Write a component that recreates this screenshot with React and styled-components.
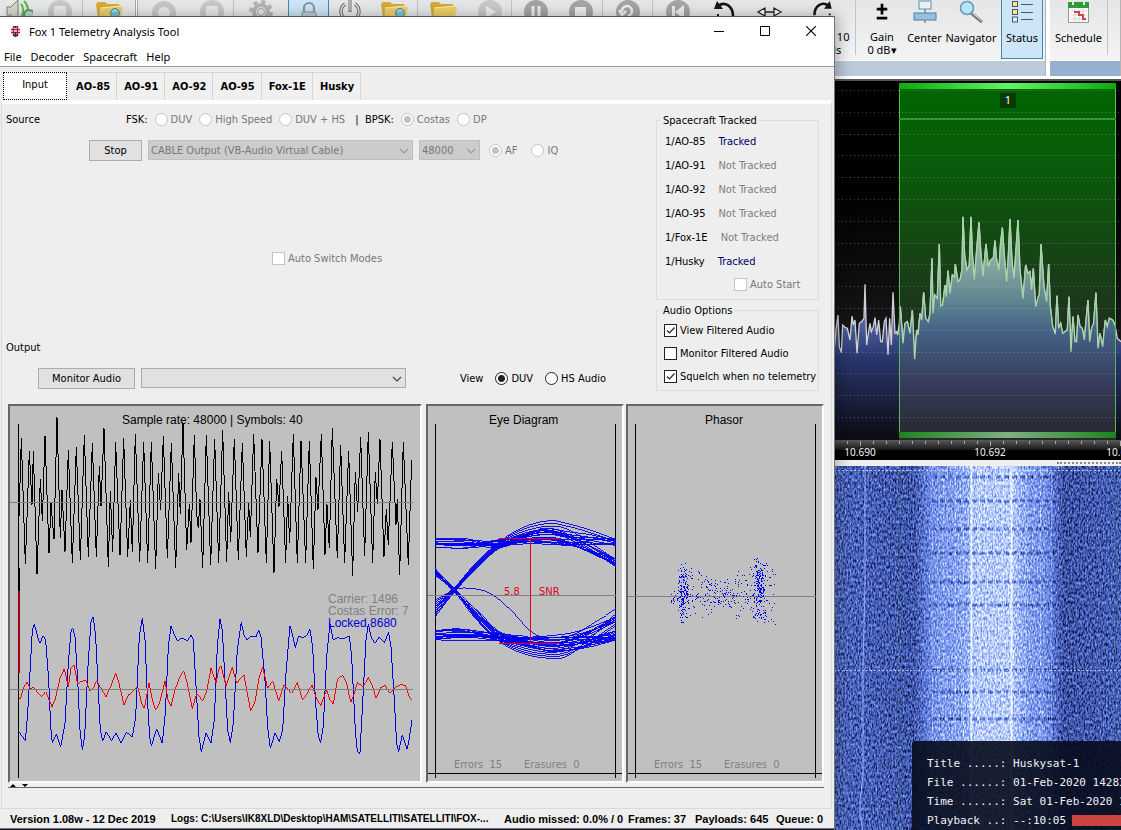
import React from 'react'
import styled, { createGlobalStyle, css } from 'styled-components';

const GlobalStyle = createGlobalStyle`
    * {
        box-sizing: border-box;
    }

    body {
        margin: 0;
        overflow: hidden;
        background: #14182c;
        font-family: "DejaVu Sans Condensed", "Noto Sans", sans-serif;
        font-size: 11px;
        color: #000;
    }
`;

/* ---------- trace data ---------- */

const AUDIO = '57,72 57,350 64,115 76,493 88,153 96,315 100,153 111,522 121,237 127,363 135,108 147,460 153,310 162,418 171,52 181,415 186,270 195,455 205,150 217,490 229,142 241,480 253,105 265,470 277,130 289,470 298,198 303,318 312,85 325,502 331,272 338,455 347,127 360,465 371,115 383,470 391,300 397,455 406,102 419,485 431,126 443,490 454,126 467,506 475,220 482,330 490,108 502,475 514,130 527,505 536,220 541,343 549,65 560,450 568,312 573,430 583,105 590,340 595,385 600,297 608,505 619,105 632,495 644,118 656,490 668,90 680,485 686,277 692,425 703,117 715,480 727,130 739,470 746,308 751,412 761,102 774,460 786,118 799,488 809,122 822,520 830,237 837,320 845,153 857,488 863,287 869,428 880,102 892,490 903,122 917,488 928,124 940,508 948,232 954,330 964,102 975,465 981,312 988,445 997,85 1012,475 1022,135 1034,488 1046,153 1058,528 1066,215 1073,335 1082,112 1094,467 1105,97 1118,490 1126,215 1132,312 1140,117 1152,470 1159,328 1165,435 1177,126 1188,375 1192,297 1199,525 1210,126 1225,495 1235,180';

const BITS = '57,457 64,465 76,482 83,400 97,150 103,132 109,155 119,190 130,167 137,180 146,300 152,440 157,488 169,462 182,502 195,430 205,250 213,155 218,143 225,170 233,300 240,450 247,510 254,470 264,260 273,125 280,110 287,170 295,330 301,450 308,484 319,455 334,482 348,460 363,488 380,457 397,472 407,410 418,170 427,115 435,180 443,370 449,470 454,498 470,447 487,490 496,400 505,200 513,138 523,165 533,182 545,174 562,182 574,165 580,180 590,350 597,470 604,515 618,460 633,490 643,420 652,200 660,118 667,150 675,300 683,450 691,488 700,430 712,210 724,127 732,165 741,180 750,171 768,171 776,150 783,170 795,300 803,440 811,505 825,460 838,485 848,450 858,280 870,138 878,165 886,203 896,167 908,173 922,165 930,148 938,200 947,370 955,470 962,488 970,440 980,230 990,130 1000,180 1012,173 1030,177 1048,168 1055,230 1066,450 1072,515 1080,520 1090,330 1098,180 1105,133 1115,175 1125,190 1138,171 1153,188 1166,157 1173,200 1183,360 1190,490 1196,515 1207,465 1222,508 1228,475 1236,420';

const ERROR = '57,355 62,355 68,330 81,305 90,325 102,323 112,337 124,350 137,335 156,380 165,360 180,295 193,266 205,320 213,265 222,255 233,312 242,305 257,300 270,332 280,325 290,302 303,325 318,350 330,325 347,280 357,310 372,375 385,345 400,333 413,320 425,370 433,385 447,308 457,360 467,390 478,370 495,302 504,360 513,378 525,330 540,290 551,272 562,310 577,387 590,340 608,362 620,335 633,265 648,310 656,270 663,257 678,318 688,290 697,262 710,310 720,298 732,285 742,340 752,393 765,365 778,290 788,262 803,325 818,303 836,362 852,315 875,340 892,307 908,360 922,340 936,315 948,350 962,377 980,330 990,360 1000,372 1012,300 1028,285 1040,310 1052,367 1060,350 1072,308 1090,320 1105,292 1118,320 1128,355 1143,322 1155,316 1170,340 1182,325 1203,313 1217,318 1228,350 1236,360';

const SPECTRUM = '12,455 14,470 18,420 24,375 28,470 34,488 38,405 45,412 52,415 60,450 66,378 70,405 75,390 81,490 88,400 95,395 102,385 105,283 110,465 115,430 120,400 124,425 130,410 135,383 140,435 146,390 152,455 157,455 163,395 168,385 174,495 179,385 184,465 189,307 195,430 200,425 203,435 208,400 211,350 219,460 225,400 232,395 240,430 247,360 254,508 260,420 264,435 270,370 275,390 281,307 287,385 295,395 300,370 306,205 309,370 314,315 322,325 328,162 332,348 338,345 345,285 349,320 354,242 360,310 367,255 374,262 376,222 384,275 390,270 396,240 399,80 404,195 411,240 418,225 423,80 427,190 433,268 440,180 447,97 453,195 459,258 468,162 475,230 482,210 490,205 495,152 500,210 507,240 511,170 517,113 524,210 530,275 535,200 540,87 546,215 552,265 558,180 564,90 570,240 579,325 587,225 594,250 600,245 605,300 610,235 617,350 625,320 628,315 633,162 642,290 650,335 656,222 661,350 668,410 676,432 681,317 686,415 692,400 698,430 705,425 712,420 717,320 723,485 729,380 735,455 740,455 744,375 750,410 757,415 763,450 768,395 774,330 779,455 785,415 791,400 798,308 804,475 810,430 818,470 826,390 832,410 838,385 848,390 855,405 862,445 873,455';

// small deterministic generator, so the plots look the same on every load
function makeRandom(seed) {
    let s = seed;
    return () => {
        s = (s * 16807) % 2147483647;
        return s / 2147483647;
    };
}

function smooth(points) {
    let d = `M${points[0][0]} ${points[0][1]}`;
    for (let i = 0; i < points.length - 1; i++) {
        const a = points[i - 1] || points[i];
        const b = points[i];
        const c = points[i + 1];
        const e = points[i + 2] || c;
        d += `C${b[0] + (c[0] - a[0]) / 6} ${b[1] + (c[1] - a[1]) / 6} ${c[0] - (e[0] - b[0]) / 6} ${c[1] - (e[1] - b[1]) / 6} ${c[0]} ${c[1]}`;
    }
    return d;
}

function buildEye() {
    const r = makeRandom(77);
    const paths = [];
    for (let i = 0; i < 13; i++) {
        const s = 416 + r() * 26;
        const p = 384 + r() * 50;
        const end = r() > 0.5 ? 414 + r() * 30 : 474 + r() * 26;
        paths.push([[46, s], [140, s + r() * 4], [240, 418 + r() * 24], [310, (p + 424) / 2], [385, p], [470, p + (end - p) * 0.3], [587, end]]);
    }
    for (let i = 0; i < 9; i++) {
        const k = i / 8;
        const p = 362 + k * 66;
        const end = r() > 0.5 ? 412 + r() * 20 : 478 + r() * 20;
        paths.push([[46, 600 + k * 50], [100, 566 + k * 14], [165, 492 + k * 18], [240, 424 + k * 20], [310, p + 20 - k * 16], [385, p], [440, p + 8], [510, p + (end - p) * 0.5], [587, end]]);
    }
    for (let i = 0; i < 10; i++) {
        const k = i / 9;
        const p = 722 + k * 53;
        const end = r() > 0.4 ? 640 + r() * 26 : 670 + r() * 60;
        paths.push([[46, 505 + k * 22], [100, 562 + r() * 14], [170, 630 + k * 30], [240, 696 + k * 30], [310, p - 14], [385, p], [440, p - 6], [510, p - (p - end) * 0.45], [587, end]]);
    }
    for (let i = 0; i < 14; i++) {
        const s = 684 + r() * 36;
        const p = 706 + r() * 50;
        const end = r() > 0.5 ? 640 + r() * 30 : 690 + r() * 40;
        paths.push([[46, s], [130, s - 8 + r() * 14], [240, 700 + r() * 24], [320, (p + 718) / 2], [400, p], [480, p - (p - end) * 0.25], [587, end]]);
    }
    paths.push([[46, 625], [100, 572], [150, 565], [210, 580], [270, 628], [340, 700], [400, 712], [460, 704], [520, 670], [587, 626]]);
    return paths.map(smooth).join('');
}

function buildPhasor() {
    const r = makeRandom(4242);
    const dots = [];
    const bell = () => r() + r() - 1;
    for (let i = 0; i < 170; i++) {
        dots.push([788 + bell() * 18, 578 + bell() * 98]);
    }
    for (let i = 0; i < 200; i++) {
        dots.push([1018 + bell() * 20, 574 + bell() * 104]);
    }
    for (let i = 0; i < 32; i++) {
        dots.push([752 + r() * 50, 596 + bell() * 20]);
        dots.push([1030 + r() * 35, 485 + r() * 198]);
    }
    for (let i = 0; i < 230; i++) {
        const t = r();
        const spread = 58 + 56 * Math.abs(t - 0.5) * 2;
        dots.push([800 + t * 210, 584 + bell() * spread]);
    }
    return dots.map(([x, y]) => `M${Math.round(x / 3) * 3} ${Math.round(y / 3) * 3}h3`).join('');
}

const EYE_PATH = buildEye();
const PHASOR_PATH = buildPhasor();

/* ---------- desktop and radio console ---------- */

const Desktop = styled.div`
    position: relative;
    display: flex;
    flex-direction: column;
    height: 100vh;
`;

const Ribbon = styled.div`
    display: flex;
    gap: 4px;
    flex: none;
    background: #fff;
    border-bottom: 2px solid #555;
    padding-bottom: 3px;
`;

const RibbonGroup = styled.div`
    display: flex;
    flex-direction: column;
    flex: ${({$grow}) => $grow ? '1' : 'none'};
    min-width: 0;
    background: #f0f1f1;
    border-right: 1px solid #b4b4b4;
`;

const RibbonRow = styled.div`
    display: flex;
    height: 60px;
    padding-right: 2px;
    background: linear-gradient(#e4e6e7, #f4f4f4);
`;

const RibbonCaption = styled.div`
    height: 16px;
    border-top: 1px solid #fff;
    background: ${({$active}) => $active ? '#96b0cf' : '#bccbd9'};
`;

const ToolButton = styled.button`
    display: flex;
    flex-direction: column;
    align-items: center;
    gap: 7px;
    flex: none;
    width: ${({$w}) => $w}px;
    height: ${({$on}) => $on ? 59 : 56}px;
    padding: 0;
    border: ${({$on}) => $on ? '1px solid #3f88b5' : '0'};
    border-top: 0;
    background: ${({$on}) => $on ? '#cde6f7' : 'none'};
    font: 11px/13px "Noto Sans", sans-serif;
    white-space: pre;
`;

const ToolSeparator = styled.span`
    flex: none;
    width: ${({$wide}) => $wide ? 3 : 1}px;
    height: 55px;
    background: #c4c4c4;
    ${({$wide}) => $wide && css`
        background: #fff;
        border-left: 1px solid #aaa;
        border-right: 1px solid #aaa;
    `}
`;

const Console = styled.div`
    display: flex;
    flex-direction: column;
    flex: 1;
    min-height: 0;
    width: 287px;
    margin-left: auto;
`;

const SpectrumPlot = styled.svg`
    display: block;
    flex: none;
    width: 100%;
    height: 359px;
    background: #000;
`;

const FrequencyScale = styled.svg`
    display: block;
    flex: none;
    width: 100%;
    height: 20px;
    background: #000;
    font: 11px "Noto Sans", sans-serif;
`;

const ConsoleSplitter = styled.div`
    display: flex;
    justify-content: flex-end;
    align-items: center;
    flex: none;
    height: 6px;
    background: #f0f0f0;

    &::after {
        content: '';
        width: 64px;
        border-top: 2px dotted #888;
    }
`;

const Waterfall = styled.div`
    position: relative;
    flex: 1;
    min-height: 0;
    overflow: hidden;
    background: #4560bb;
`;

const WaterfallPlot = styled.svg`
    display: block;
    width: 100%;
    height: 100%;
`;

const InfoPanel = styled.dl`
    position: absolute;
    right: 0;
    bottom: 0;
    width: 209px;
    margin: 0;
    padding: 13px 0 0 15px;
    border-top-left-radius: 3px;
    background: rgba(6, 11, 28, 0.9);
    color: #f2f2f2;
    font: 11px/19px "DejaVu Sans Mono", monospace;
    overflow: hidden;
`;

const InfoLine = styled.div`
    display: flex;
    align-items: center;
    white-space: pre;

    dt, dd {
        margin: 0;
    }
`;

const PlaybackBar = styled.span`
    width: 60px;
    height: 11px;
    margin-left: 6px;
    background: #cd4340;
`;

/* ---------- telemetry window ---------- */

const Window = styled.main`
    position: absolute;
    top: 16px;
    left: 0;
    right: 286px;
    bottom: 1px;
    display: flex;
    flex-direction: column;
    background: #eeeeee;
    border-top: 1px solid #555;
    border-right: 1px solid #777;
    border-bottom: 1px solid #777;
    box-shadow: 3px 0 14px rgba(0, 0, 0, 0.3);
`;

const TitleBar = styled.header`
    display: flex;
    align-items: center;
    gap: 7px;
    height: 29px;
    padding-left: 9px;
    background: #fff;
    font-family: "Noto Sans", sans-serif;
`;

const TitleText = styled.h1`
    flex: 1;
    margin: 0;
    font-size: 11px;
    font-weight: 400;
`;

const WindowButton = styled.button`
    width: 46px;
    height: 28px;
    padding: 0;
    border: 0;
    background: none;
`;

const MenuBar = styled.nav`
    display: flex;
    gap: 9px;
    height: 21px;
    padding: 1px 0 0 4px;
    background: #fff;
    border-bottom: 1px solid #999;
    line-height: 19px;
    font-family: "Noto Sans", sans-serif;
`;

const MenuLink = styled.a`
    color: #000;
    text-decoration: none;
`;

const Tabs = styled.div`
    display: flex;
    align-items: flex-end;
    height: 33px;
    padding: 0 3px;
    background: #eeeeee;
`;

const Tab = styled.button`
    height: 28px;
    padding: 0 6px 0 7px;
    border: 1px solid #d5d5d5;
    border-left: 0;
    border-bottom: 0;
    background: #f0f0f0;
    font: bold 11px "DejaVu Sans Condensed", "Noto Sans", sans-serif;

    ${({$active}) => $active && css`
        width: 64px;
        margin-right: 2px;
        padding: 0 0 3px;
        border: 1px dotted #000;
        background: #fff;
        font-weight: 400;
    `}
`;

const TabPanel = styled.div`
    display: flex;
    flex-direction: column;
    flex: 1;
    min-height: 0;
    margin: 0 2px 0 1px;
    border: 1px solid #d9d9d9;
    border-top: 4px solid #fff;
`;

const Settings = styled.div`
    display: flex;
    justify-content: space-between;
    height: 300px;
    padding: 6px 12px 0 4px;
`;

const Controls = styled.div`
    display: flex;
    flex-direction: column;
    flex: 1;
`;

const Line = styled.div`
    display: flex;
    align-items: center;
    flex: none;
    height: ${({$h}) => $h || 20}px;
    padding-left: ${({$indent}) => $indent || 0}px;
    gap: ${({$gap}) => $gap || 0}px;
`;

const SectionLabel = styled.span`
    width: 120px;
`;

const SourceModes = styled.div`
    display: flex;
    align-items: center;
    gap: 7px;
`;

const SideColumn = styled.div`
    display: flex;
    flex-direction: column;
    gap: 4px;
    width: 163px;
    padding-top: 4px;
`;

const Group = styled.fieldset`
    display: flex;
    flex-direction: column;
    min-width: 0;
    margin: 0;
    padding: ${({$pad}) => $pad || '0 6px 4px'};
    border: 1px solid #dcdcdc;

    legend {
        margin-left: -2px;
        padding: 0 2px;
        line-height: 13px;
    }
`;

const TrackedRow = styled.div`
    display: flex;
    gap: 13px;
    height: 24px;
    padding-left: 2px;
    line-height: 17px;
`;

const TrackedState = styled.span`
    color: ${({$tracked}) => $tracked ? '#000066' : '#808080'};
`;

const Choice = styled.label`
    display: inline-flex;
    align-items: center;
    gap: 3px;
    color: ${({$disabled}) => $disabled ? '#777' : '#000'};
    white-space: nowrap;
`;

const inputBase = css`
    appearance: none;
    flex: none;
    width: 13px;
    height: 13px;
    margin: 0;
    background: #fff;
    border: 1px solid #222;

    &:disabled {
        border-color: #c4c4c4;
    }
`;

const RadioInput = styled.input`
    ${inputBase}
    border-radius: 50%;

    &:checked {
        background: radial-gradient(circle, #222 3px, #fff 4px);
    }

    &:checked:disabled {
        background: radial-gradient(circle, #c0c0c0 3px, #fff 4px);
    }
`;

const CheckFrame = styled.span`
    position: relative;
    display: inline-flex;

    svg {
        position: absolute;
        top: 0;
        left: 0;
        pointer-events: none;
    }
`;

const CheckInput = styled.input`
    ${inputBase}
`;

const CheckList = styled.div`
    display: flex;
    flex-direction: column;
    gap: 10px;
    padding: 7px 0 3px 1px;
`;

const PushButton = styled.button`
    width: ${({$w}) => $w}px;
    height: 21px;
    padding: 0;
    border: 1px solid #adadad;
    background: #e1e1e1;
    font: inherit;
`;

const SelectFrame = styled.span`
    position: relative;
    display: inline-flex;
    width: ${({$w}) => $w}px;

    svg {
        position: absolute;
        right: 4px;
        top: 8px;
        pointer-events: none;
    }
`;

const SelectInput = styled.select`
    appearance: none;
    width: 100%;
    height: 20px;
    padding: 0 2px;
    border: 1px solid #adadad;
    border-radius: 0;
    background: #e1e1e1;
    color: #000;
    font: inherit;

    &:disabled {
        background: #cccccc;
        border-color: #bfbfbf;
        color: #777;
        opacity: 1;
    }
`;

const Charts = styled.div`
    display: grid;
    grid-template-columns: minmax(0, 1fr) 198px 198px;
    gap: 2px;
    flex: 1;
    min-height: 0;
    padding: 0 7px 0 6px;
`;

const ChartFrame = styled.div`
    min-width: 0;
    min-height: 0;
    margin-right: ${({$apart}) => $apart ? 2 : 0}px;
    border: 2px solid #666;
    border-right-color: #fff;
    border-bottom-color: #fff;
    background: #c0c0c0;
    overflow: hidden;
`;

const ChartSvg = styled.svg`
    display: block;
    font: 12px "Liberation Sans", Arial, sans-serif;

    .small {
        font: 11px "DejaVu Sans Condensed", "Noto Sans", sans-serif;
    }
`;

const SplitHandle = styled.div`
    height: 5px;
    margin: 0 7px 20px 6px;
    border-bottom: 1px solid #666;

    svg {
        display: block;
    }
`;

const StatusBar = styled.footer`
    display: grid;
    grid-template-columns: 161px minmax(0, 1fr) 124px 67px 81px 58px;
    align-items: center;
    height: 19px;
    padding-left: 10px;
    font: bold 11px "Liberation Sans", Arial, sans-serif;
    white-space: nowrap;
`;

const LogPath = styled.span`
    font-size: 10px;
`;

/* ---------- parts ---------- */

function Radio({ name, label, checked, disabled }) {
    return (
        <Choice $disabled={disabled}>
            <RadioInput type="radio" name={name} defaultChecked={checked} disabled={disabled} />
            {label}
        </Choice>
    )
}

function Check({ label, checked, disabled }) {
    return (
        <Choice $disabled={disabled}>
            <CheckFrame>
                <CheckInput type="checkbox" defaultChecked={checked} disabled={disabled} />
                {checked && (
                    <svg width="13" height="13">
                        <path d="M3 6.5L5.5 9L10.5 3.5" fill="none" stroke="#222" strokeWidth="1.2" />
                    </svg>
                )}
            </CheckFrame>
            {label}
        </Choice>
    )
}

function Select({ label, width, value, disabled }) {
    return (
        <SelectFrame $w={width}>
            <SelectInput aria-label={label} disabled={disabled}>
                <option>{value}</option>
            </SelectInput>
            <svg width="10" height="6">
                <path d="M1 1L5 5L9 1" fill="none" stroke={disabled ? '#999' : '#444'} strokeWidth="1.2" />
            </svg>
        </SelectFrame>
    )
}

function FolderArt({ lens }) {
    return (
        <>
            <path d="M1 4L3 2H10L12 4H24L25 7V24H4Z" fill="#d6ab35" />
            <path d="M5 8L26 6L28 8L24 24H4Z" fill="#efd06c" />
            <path d="M5 8L26 6" stroke="#fbeeb4" />
            {lens && (
                <>
                    <circle cx="20" cy="13" r="4.500" fill="#7cc5d2" stroke="#4f8d98" />
                    <path d="M17.500 12C18 10 21 10 22 11" fill="none" stroke="#d9f5fb" />
                </>
            )}
        </>
    )
}

function ToolArt({ kind }) {
    const disc = <circle cx="14" cy="12" r="12" fill="#a5a5a5" />;
    const art = {
        speaker: (
            <>
                <path d="M2 7H6L13 0V22L6 15H2Z" fill="#d8d8cf" stroke="#7d7d72" />
                <path d="M16 4C19 7 19 13 16 17M19 1C24 6 24 13 20 18" fill="none" stroke="#5cbb4c" strokeWidth="2" />
                <circle cx="24" cy="15" r="5" fill="#b4dcc0" stroke="#6d8a78" strokeWidth="2" />
            </>
        ),
        ring: <circle cx="14" cy="13" r="9" fill="none" stroke="#c7c7c7" strokeWidth="6" />,
        block: (
            <>
                <circle cx="14" cy="12" r="12" fill="#c8c8c8" />
                <rect x="8" y="6" width="12" height="12" rx="2" fill="#e8e8e8" />
            </>
        ),
        folderLens: <FolderArt lens />,
        folder: <FolderArt />,
        gear: (
            <>
                <circle cx="14" cy="12" r="7" fill="none" stroke="#b4b4b4" strokeWidth="4" />
                <circle cx="14" cy="12" r="10" fill="none" stroke="#b4b4b4" strokeWidth="4" strokeDasharray="4 3.85" />
                <circle cx="14" cy="12" r="3.500" fill="none" stroke="#999" />
            </>
        ),
        lock: (
            <>
                <path d="M9 13V8A5 5 0 0 1 19 8V13" fill="none" stroke="#8796a0" strokeWidth="2.2" />
                <rect x="7" y="12" width="14" height="11" rx="1" fill="#c2cdd3" stroke="#8796a0" />
            </>
        ),
        power: (
            <>
                <path d="M9 4A9 9 0 1 0 19 4" fill="none" stroke="#707070" strokeWidth="3.4" />
                <path d="M9 4A9 9 0 1 0 19 4" fill="none" stroke="#eee" strokeWidth="1.2" />
                <path d="M14 0V12" stroke="#707070" strokeWidth="3" />
                <path d="M14 0V11" stroke="#eee" strokeWidth="1" />
            </>
        ),
        play: (
            <>
                <circle cx="14" cy="12" r="12" fill="#c9c9c9" />
                <path d="M10 6L20 12L10 18Z" fill="#eee" />
            </>
        ),
        pause: <>{disc}<path d="M11 6V19M17 6V19" stroke="#eee" strokeWidth="3" /></>,
        stop: <>{disc}<rect x="8" y="7" width="11" height="11" fill="#eee" /></>,
        loop: <>{disc}<path d="M8 12A5 5 0 1 1 14 16M5 10L8 15L12 11" fill="none" stroke="#eee" strokeWidth="2.6" /></>,
        skip: <>{disc}<path d="M8 6H11V18H8ZM20 5V19L11 12Z" fill="#eee" /></>,
        undo: (
            <>
                <path d="M7 6C14 1 22 6 22 16" fill="none" stroke="#151515" strokeWidth="2.6" />
                <path d="M3 9L6 1L12 9Z" fill="#151515" />
                <path d="M7 14V24" stroke="#151515" strokeWidth="2" strokeDasharray="2 2" />
            </>
        ),
        span: <path d="M2 12L9 8V16ZM25 12L18 8V16ZM9 12H18" fill="#fff" stroke="#222" strokeWidth="1.3" />,
        redo: (
            <>
                <path d="M19 6C12 1 4 6 4 16" fill="none" stroke="#151515" strokeWidth="2.6" />
                <path d="M22 9L20 1L14 9Z" fill="#151515" />
                <path d="M20 14V24" stroke="#151515" strokeWidth="2" strokeDasharray="2 2" />
            </>
        ),
        gain: <path d="M14 4V15M8.500 9.500H19.500M8.500 19H19.500" stroke="#000" strokeWidth="2.800" />,
        center: (
            <>
                <path d="M14 8V23" stroke="#555" />
                <rect x="8" y="1" width="12" height="8" fill="#e2f2fb" stroke="#6d8ba1" />
                <rect x="3" y="13" width="22" height="7" fill="#91c2e4" stroke="#527da0" />
            </>
        ),
        navigator: (
            <>
                <path d="M14 13L25 22" stroke="#777" strokeWidth="3" />
                <path d="M15 13L25 21" stroke="#ddd" strokeWidth="1" />
                <circle cx="10" cy="8" r="6.500" fill="#b9e4f8" stroke="#5f9cc0" strokeWidth="1.600" />
            </>
        ),
        status: (
            <>
                <g stroke="#4c5666" fill="#f2ec83">
                    <rect x="4.500" y="1.500" width="5" height="5" />
                    <rect x="4.500" y="9.500" width="5" height="5" />
                    <rect x="4.500" y="17" width="5" height="5" fill="#e8f3fa" />
                </g>
                <path d="M13 4.500H25M13 12.500H25M13 19.500H25" stroke="#4a5a70" />
            </>
        ),
        schedule: (
            <>
                <rect x="3.500" y="2.500" width="20" height="20" fill="#fafafa" stroke="#9a9a9a" />
                <rect x="3" y="2" width="21" height="6" fill="#2f9a36" />
                <path d="M8 1V5M19 1V5" stroke="#ddf0dd" strokeWidth="2" />
                <path d="M6 11H22M6 15H22M6 19H22M10 9V22M14 9V22M18 9V22" stroke="#d8d8d8" />
                <path d="M9 12H14V15H18V19H21" fill="none" stroke="#d04545" strokeWidth="2" />
            </>
        ),
    };
    return <svg width="28" height="24" viewBox="0 0 28 24" aria-hidden="true">{art[kind]}</svg>
}

const MAIN_TOOLS = [
    ['speaker', 38], ['block', 44], '|', ['folderLens', 52], '||', ['ring', 52], ['block', 43], '|',
    ['gear', 54], ['lock', 41, '', true], ['power', 42], ['folderLens', 46], '|', ['folder', 50], ['play', 43], '|',
    ['pause', 47], ['stop', 43], '|', ['loop', 49], '|', ['skip', 49], ['undo', 45], ['span', 46],
    ['redo', 62, '     Last 10\nSeconds   '], '|', ['gain', 52, 'Gain\n0 dB▾'], ['center', 33, 'Center'],
    ['navigator', 60, 'Navigator'], ['status', 42, 'Status', true],
];

function Tools({ items }) {
    return items.map((item, i) => {
        if (typeof item === 'string') {
            return <ToolSeparator key={i} $wide={item === '||'} />
        }
        const [kind, width, label, on] = item;
        return (
            <ToolButton key={i} $w={width} $on={on} aria-label={label || kind}>
                <ToolArt kind={kind} />
                {label}
            </ToolButton>
        )
    })
}

function Spectrum() {
    const rows = [];
    for (let y = 9; y < 350; y += 21.8) {
        rows.push(`M0 ${Math.round(y) + 0.5}H287`);
    }
    const area = `12,760 ${SPECTRUM} 873,760`;
    return (
        <SpectrumPlot viewBox="0 0 287 359" preserveAspectRatio="none">
            <defs>
                <linearGradient id="back" x2="0" y2="1">
                    <stop offset=".3" stopColor="#000" />
                    <stop offset=".8" stopColor="#1b1b1d" />
                </linearGradient>
                <linearGradient id="pass" x2="0" y2="1">
                    <stop offset="0" stopColor="#006600" />
                    <stop offset=".25" stopColor="#0a5a0a" />
                    <stop offset=".7" stopColor="#203020" />
                </linearGradient>
                <linearGradient id="outside" gradientUnits="userSpaceOnUse" x1="0" y1="380" x2="0" y2="740">
                    <stop offset="0" stopColor="#5568aa" />
                    <stop offset=".35" stopColor="#28366c" />
                    <stop offset="1" stopColor="#0c0d14" />
                </linearGradient>
                <linearGradient id="inside" gradientUnits="userSpaceOnUse" x1="0" y1="80" x2="0" y2="740">
                    <stop offset="0" stopColor="#a4cfa4" />
                    <stop offset=".25" stopColor="#809f9c" />
                    <stop offset=".4" stopColor="#5a818f" />
                    <stop offset=".52" stopColor="#456287" />
                    <stop offset=".75" stopColor="#363d5c" />
                    <stop offset="1" stopColor="#27272d" />
                </linearGradient>
                <linearGradient id="strip">
                    <stop offset="0" stopColor="#0eaa0e" />
                    <stop offset=".5" stopColor="#62f562" />
                    <stop offset="1" stopColor="#0eaa0e" />
                </linearGradient>
                <linearGradient id="foot">
                    <stop offset="0" stopColor="#1d841d" />
                    <stop offset=".5" stopColor="#7fb083" />
                    <stop offset="1" stopColor="#1d841d" />
                </linearGradient>
                <clipPath id="passClip"><rect x="65" width="217" height="359" /></clipPath>
            </defs>
            <rect width="287" height="359" fill="url(#back)" />
            <rect x="65" y="2" width="217" height="355" fill="url(#pass)" />
            <g transform="translate(-4 109) scale(.3333)">
                <polygon points={area} fill="url(#outside)" />
                <polyline points={SPECTRUM} fill="none" stroke="#cfcfd4" strokeWidth="4" />
            </g>
            <g clipPath="url(#passClip)">
                <g transform="translate(-4 109) scale(.3333)">
                    <polygon points={area} fill="url(#inside)" />
                    <polyline points={SPECTRUM} fill="none" stroke="#a9d3a9" strokeWidth="4" />
                </g>
            </g>
            <path d={rows.join('')} stroke="#fff" strokeOpacity=".28" strokeDasharray="1 3" />
            <path d="M65.500 2V357M281.500 2V357" stroke="#58b858" />
            <path d="M65 38H282" stroke="#2f9a2f" strokeWidth="2" />
            <rect x="65" y="2" width="217" height="6" fill="url(#strip)" />
            <rect x="65" y="351" width="217" height="6" fill="url(#foot)" />
            <rect x="166" y="12" width="16" height="15" fill="#083a08" />
            <text x="174" y="23" fill="#fff" textAnchor="middle" fontFamily="Noto Sans" fontSize="11">1</text>
        </SpectrumPlot>
    )
}

function Scale() {
    const ticks = [];
    for (let i = 0; i < 23; i++) {
        ticks.push(`M${i * 13}.5 1v${i % 10 === 2 ? 5 : 3}`);
    }
    return (
        <FrequencyScale>
            <defs>
                <linearGradient id="rule" x2="0" y2="1">
                    <stop offset="0" stopColor="#5b5b5b" />
                    <stop offset="1" stopColor="#161616" />
                </linearGradient>
            </defs>
            <rect width="100%" height="10" fill="url(#rule)" />
            <path d={ticks.join('')} stroke="#a8a8a8" />
            <g fill="#f4f4f4" fontSize="10" textAnchor="middle">
                <text x="26" y="16">10.690</text>
                <text x="156" y="16">10.692</text>
                <text x="288" y="16">10.694</text>
            </g>
        </FrequencyScale>
    )
}

function WaterfallArt() {
    const marks = [11, 35, 63, 87, 116, 139, 204, 226, 253];
    return (
        <WaterfallPlot viewBox="0 0 287 364" preserveAspectRatio="xMinYMin slice">
            <defs>
                <linearGradient id="level">
                    <stop offset="0" stopColor="#5c5c5c" />
                    <stop offset=".28" stopColor="#505050" />
                    <stop offset=".35" stopColor="#888888" />
                    <stop offset=".45" stopColor="#969696" />
                    <stop offset=".5" stopColor="#b4b4b4" />
                    <stop offset=".62" stopColor="#b4b4b4" />
                    <stop offset=".67" stopColor="#949494" />
                    <stop offset=".74" stopColor="#848484" />
                    <stop offset=".8" stopColor="#4c4c4c" />
                    <stop offset="1" stopColor="#585858" />
                </linearGradient>
                <filter id="noise" x="0" y="0" width="100%" height="100%" colorInterpolationFilters="sRGB">
                    <feTurbulence type="fractalNoise" baseFrequency=".62 .31" numOctaves="2" seed="8" />
                    <feColorMatrix values="1 0 0 0 0 1 0 0 0 0 1 0 0 0 0 0 0 0 0 1" result="grain" />
                    <feComposite in="SourceGraphic" in2="grain" operator="arithmetic" k2="1" k3=".8" k4="-.4" />
                    <feComponentTransfer>
                        <feFuncR type="table" tableValues=".02 .07 .23 .36 .5 .74 .92 1" />
                        <feFuncG type="table" tableValues=".04 .12 .31 .47 .62 .82 .95 1" />
                        <feFuncB type="table" tableValues=".15 .32 .64 .84 .97 1 1 1" />
                    </feComponentTransfer>
                </filter>
            </defs>
            <g filter="url(#noise)">
                <rect width="287" height="364" fill="url(#level)" />
                <g stroke="#fff" strokeOpacity=".16">
                    <path d="M98.500 0V364M109.500 0V364M121.500 0V364M129.500 0V364M145.500 0V364M169.500 0V364M191.500 0V364M206.500 0V364M217.500 0V364" />
                    <path d="M137.500 0V364M177.500 0V364" strokeWidth="2" strokeOpacity=".6" />
                </g>
                {marks.map(y => (
                    <path key={y} d={`M98 ${y}H222`} stroke="#000" strokeOpacity=".36" strokeWidth="3" strokeDasharray="5 3" />
                ))}
            </g>
            <path d="M31 0V120L29 200V310L26 335V350L29 364" fill="none" stroke="#93adff" />
            <path d="M65.500 0V364M281.500 0V364" stroke="#2a6b52" strokeDasharray="3 3" />
            <path d="M0 4.500H287M0 204.500H287" stroke="#d0dcff" strokeOpacity=".8" strokeDasharray="2 2" />
        </WaterfallPlot>
    )
}

function AudioChart() {
    return (
        <ChartSvg width="410" height="376" shapeRendering="crispEdges">
            <text x="112" y="18">Sample rate: 48000 | Symbols: 40</text>
            <g fill="#808080">
                <text x="318" y="197">Carrier: 1496</text>
                <text x="318" y="209">Costas Error: 7</text>
            </g>
            <text x="318" y="221" fill="#0000dd">Locked 8680</text>
            <g fill="none" strokeWidth="3">
                <g transform="translate(-10 -6) scale(.3333)">
                    <polyline points={AUDIO} stroke="#000" />
                </g>
                <g transform="translate(-10 174) scale(.3333)">
                    <polyline points={BITS} stroke="#0000dd" />
                    <polyline points={ERROR} stroke="#ee0000" />
                </g>
            </g>
            <rect x="8" y="18" width="1" height="354" />
            <rect x="9" y="162" width="1" height="24" />
            <rect x="8" y="185" width="2" height="82" fill="#a00018" />
            <path d="M0 96.500H403M0 283.500H403" stroke="#808080" />
        </ChartSvg>
    )
}

function ChartFooter() {
    return (
        <>
            <path d="M0 367.500H196" stroke="#000" />
            <g fill="#808080">
                <text className="small" x="26" y="362">Errors&nbsp; 15</text>
                <text className="small" x="96" y="362">Erasures&nbsp; 0</text>
            </g>
        </>
    )
}

function EyeChart() {
    return (
        <ChartSvg width="195" height="376">
            <text x="61" y="18">Eye Diagram</text>
            <path d="M7.500 18V372M187.500 18V372" stroke="#000" />
            <path d={EYE_PATH} transform="translate(-8 -6) scale(.3333)" fill="none" stroke="#0000ee" strokeWidth="2.700" shapeRendering="crispEdges" />
            <path d="M0 189.500H188" stroke="#808080" />
            <g fill="#e00020">
                <rect x="102" y="132" width="1" height="106" />
                <rect x="71" y="132" width="61" height="1" />
                <rect x="71" y="237" width="61" height="1" />
                <text className="small" x="76" y="189">5.8</text>
                <text className="small" x="111" y="189">SNR</text>
            </g>
            <ChartFooter />
        </ChartSvg>
    )
}

function PhasorChart() {
    return (
        <ChartSvg width="195" height="376">
            <text x="77" y="18">Phasor</text>
            <path d="M7.500 18V372M187.500 18V372" stroke="#000" />
            <path d="M0 190.500H188" stroke="#808080" />
            <path d={PHASOR_PATH} transform="translate(-208 -6) scale(.3333)" stroke="#0000ee" strokeWidth="3" shapeRendering="crispEdges" />
            <ChartFooter />
        </ChartSvg>
    )
}

const SPACECRAFT = [
    ['1/AO-85', true],
    ['1/AO-91', false],
    ['1/AO-92', false],
    ['1/AO-95', false],
    ['1/Fox-1E', false],
    ['1/Husky', true],
];

function CraftList() {
    return (
        <>
            {SPACECRAFT.map(([name, tracked]) => (
                <TrackedRow key={name}>
                    <span>{name}</span>
                    <TrackedState $tracked={tracked}>{tracked ? 'Tracked' : 'Not Tracked'}</TrackedState>
                </TrackedRow>
            ))}
            <Line $h={14} $indent={71}>
                <Check label="Auto Start" disabled />
            </Line>
        </>
    )
}

function TelemetryWindow() {
    return (
        <Window>
            <TitleBar>
                <svg width="13" height="13" viewBox="0 0 13 13" aria-hidden="true">
                    <circle cx="6.500" cy="6" r="5" fill="#e3c3c8" />
                    <path d="M4 1.500H9M2 4.500H11M2 7.500H11M4.500 1V10M8.500 1V10" stroke="#b0203a" strokeWidth="1.200" />
                    <path d="M4 10.500H9M6.500 7V12M6.500 1V3" stroke="#25255f" strokeWidth="1.600" />
                </svg>
                <TitleText>Fox 1 Telemetry Analysis Tool</TitleText>
                <div>
                    <WindowButton aria-label="Minimize">
                        <svg width="10" height="10"><path d="M0 5.500H10" stroke="#000" /></svg>
                    </WindowButton>
                    <WindowButton aria-label="Maximize">
                        <svg width="10" height="10"><path d="M.5 .5H9.500V9.500H.5Z" fill="none" stroke="#000" /></svg>
                    </WindowButton>
                    <WindowButton aria-label="Close">
                        <svg width="10" height="10"><path d="M0 0L10 10M10 0L0 10" stroke="#000" strokeWidth="1.100" /></svg>
                    </WindowButton>
                </div>
            </TitleBar>
            <MenuBar>
                {['File', 'Decoder', 'Spacecraft', 'Help'].map(item => (
                    <MenuLink key={item} href="#">{item}</MenuLink>
                ))}
            </MenuBar>
            <Tabs role="tablist">
                {['Input', 'AO-85', 'AO-91', 'AO-92', 'AO-95', 'Fox-1E', 'Husky'].map((tab, i) => (
                    <Tab key={tab} role="tab" aria-selected={i === 0} $active={i === 0}>{tab}</Tab>
                ))}
            </Tabs>
            <TabPanel>
                <Settings>
                    <Controls>
                        <Line $h={18}>
                            <SectionLabel>Source</SectionLabel>
                            <SourceModes>
                                FSK:
                                <Radio name="mode" label="DUV" disabled />
                                <Radio name="mode" label="High Speed" disabled />
                                <Radio name="mode" label="DUV + HS" disabled />
                                <span>&nbsp;|&nbsp; BPSK:</span>
                                <Radio name="mode" label="Costas" disabled checked />
                                <Radio name="mode" label="DP" disabled />
                            </SourceModes>
                        </Line>
                        <Line $h={44} $indent={83} $gap={6}>
                            <PushButton $w={53}>Stop</PushButton>
                            <Select label="Source device" width={265} value="CABLE Output (VB-Audio Virtual Cable)" disabled />
                            <Select label="Sample rate" width={61} value="48000" disabled />
                            <Line $indent={3} $gap={14}>
                                <Radio name="band" label="AF" disabled checked />
                                <Radio name="band" label="IQ" disabled />
                            </Line>
                        </Line>
                        <Line $h={172} $indent={266}>
                            <Check label="Auto Switch Modes" disabled />
                        </Line>
                        <Line $h={6}>Output</Line>
                        <Line $h={56} $indent={32} $gap={6}>
                            <PushButton $w={97}>Monitor Audio</PushButton>
                            <Select label="Output device" width={265} value="" />
                            <Line $indent={48} $gap={12}>
                                View
                                <Radio name="view" label="DUV" checked />
                                <Radio name="view" label="HS Audio" />
                            </Line>
                        </Line>
                    </Controls>
                    <SideColumn>
                        <Group $pad="6px 6px 8px">
                            <legend>Spacecraft Tracked</legend>
                            <CraftList />
                        </Group>
                        <Group>
                            <legend>Audio Options</legend>
                            <CheckList>
                                <Check label="View Filtered Audio" checked />
                                <Check label="Monitor Filtered Audio" />
                                <Check label="Squelch when no telemetry" checked />
                            </CheckList>
                        </Group>
                    </SideColumn>
                </Settings>
                <Charts>
                    <ChartFrame $apart><AudioChart /></ChartFrame>
                    <ChartFrame><EyeChart /></ChartFrame>
                    <ChartFrame><PhasorChart /></ChartFrame>
                </Charts>
                <SplitHandle>
                    <svg width="30" height="4"><path d="M2 4L5 1L8 4ZM14 1H20L17 4Z" /></svg>
                </SplitHandle>
            </TabPanel>
            <StatusBar>
                <span>Version 1.08w - 12 Dec 2019</span>
                <LogPath>Logs: C:\Users\IK8XLD\Desktop\HAM\SATELLITI\SATELLITI\FOX-...</LogPath>
                <span>Audio missed: 0.0% / 0</span>
                <span>Frames: 37</span>
                <span>Payloads: 645</span>
                <span>Queue: 0</span>
            </StatusBar>
        </Window>
    )
}

export default function App() {
    return (
        <Desktop>
            <GlobalStyle />
            <Ribbon>
                <RibbonGroup>
                    <RibbonRow><Tools items={MAIN_TOOLS} /></RibbonRow>
                    <RibbonCaption />
                </RibbonGroup>
                <RibbonGroup $grow>
                    <RibbonRow><Tools items={[['schedule', 57, 'Schedule'], '|']} /></RibbonRow>
                    <RibbonCaption $active />
                </RibbonGroup>
            </Ribbon>
            <Console>
                <Spectrum />
                <Scale />
                <ConsoleSplitter />
                <Waterfall>
                    <WaterfallArt />
                    <InfoPanel>
                        <InfoLine><dt>Title .....: </dt><dd>Huskysat-1</dd></InfoLine>
                        <InfoLine><dt>File ......: </dt><dd>01-Feb-2020 14283</dd></InfoLine>
                        <InfoLine><dt>Time ......: </dt><dd>Sat 01-Feb-2020 1</dd></InfoLine>
                        <InfoLine><dt>Playback ..: </dt><dd>--:10:05</dd><PlaybackBar /></InfoLine>
                    </InfoPanel>
                </Waterfall>
            </Console>
            <TelemetryWindow />
        </Desktop>
    )
}
